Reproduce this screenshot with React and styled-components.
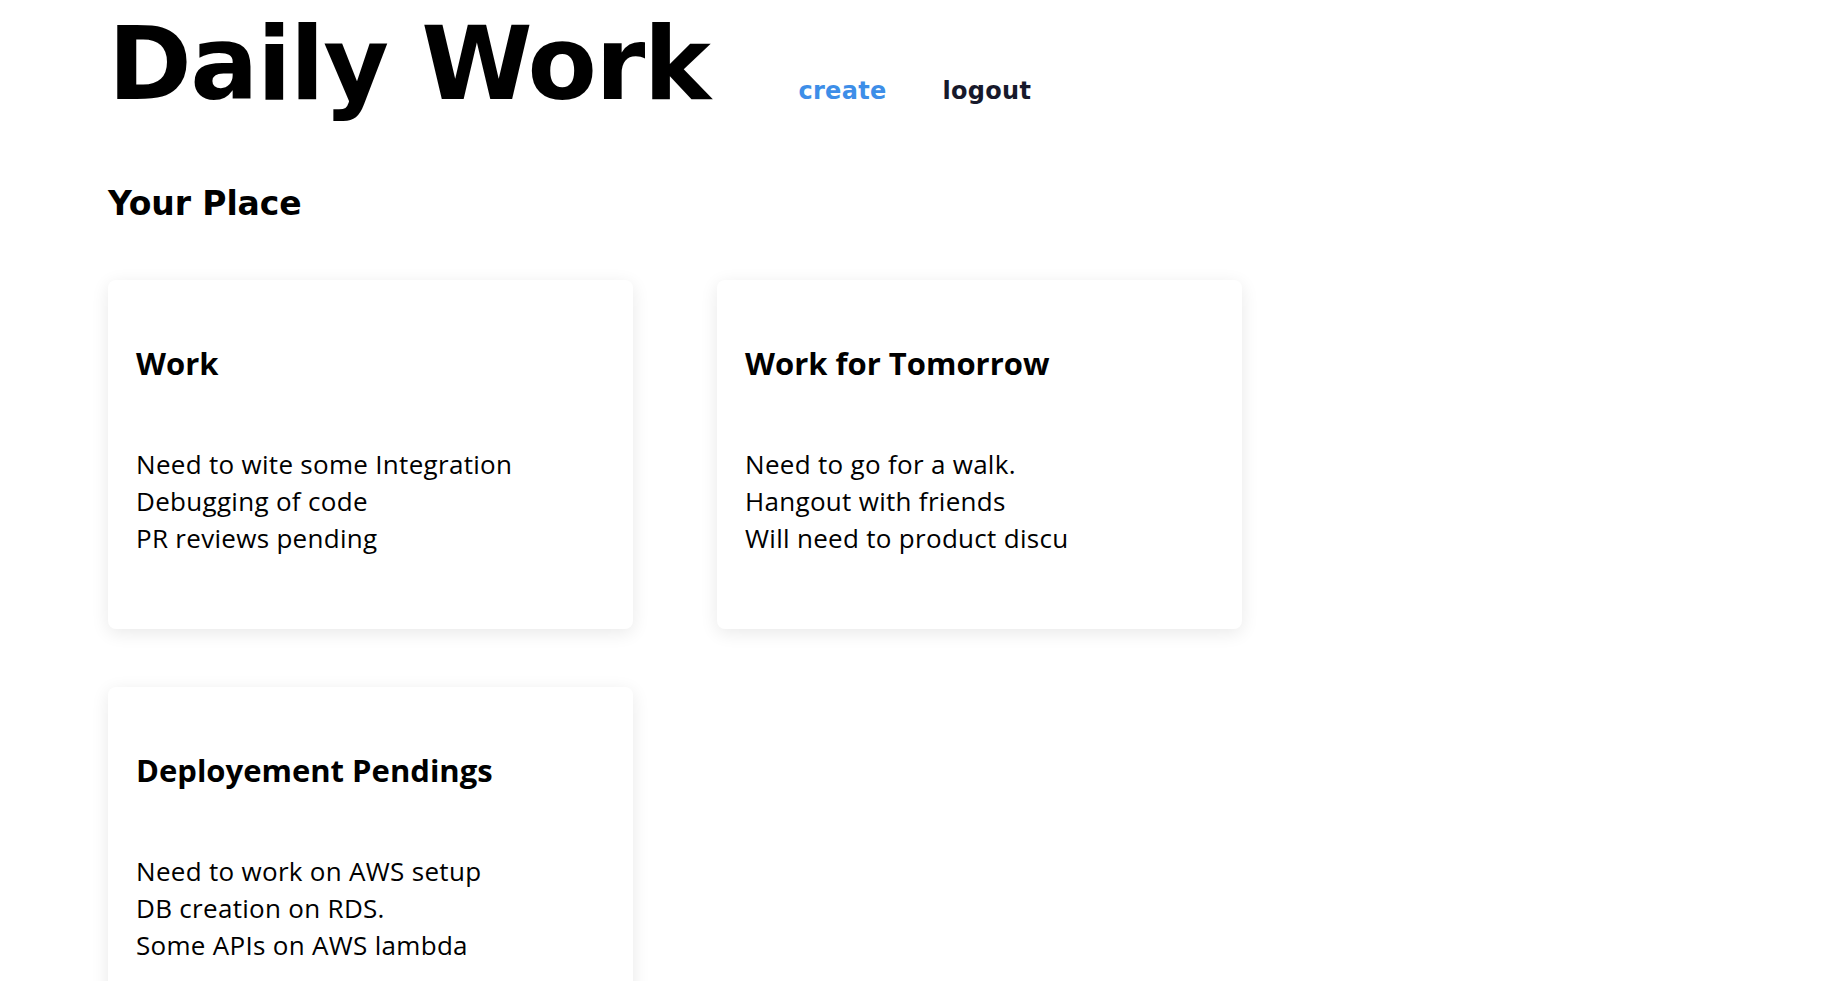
import React from "react";
import styled, { createGlobalStyle } from "styled-components";

const GlobalStyle = createGlobalStyle`
  body {
    margin: 0;
    background: #ffffff;
    color: #000000;
    font-family: "Open Sans", "Noto Sans", sans-serif;
  }
`;

const Page = styled.div`
  padding: 14px 108px 0;
`;

const Header = styled.header`
  display: flex;
  align-items: baseline;
`;

const Title = styled.h1`
  margin: 0;
  font-family: "DejaVu Sans", sans-serif;
  font-size: 101px;
  font-weight: 700;
  line-height: 1;
  letter-spacing: -1.5px;
`;

const Nav = styled.nav`
  display: flex;
  align-items: baseline;
  gap: 56px;
  margin-left: 89px;
`;

const NavLink = styled.a`
  font-family: "DejaVu Sans", sans-serif;
  font-size: 24px;
  font-weight: 700;
  line-height: 1;
  letter-spacing: 0.3px;
  text-decoration: none;
  cursor: pointer;
  color: ${(p) => (p.$active ? "#3d8ee8" : "#17192b")};
`;

const SubTitle = styled.h2`
  margin: 69px 0 0;
  font-family: "DejaVu Sans", sans-serif;
  font-size: 33px;
  font-weight: 700;
  line-height: 1.2;
  letter-spacing: -0.1px;
`;

const Grid = styled.div`
  display: grid;
  grid-template-columns: repeat(2, 525px);
  column-gap: 84px;
  row-gap: 58px;
  margin-top: 56px;
`;

const Card = styled.div`
  box-sizing: border-box;
  min-height: 349px;
  padding: 65px 28px 72px;
  background: #ffffff;
  border-radius: 8px;
  box-shadow: 0 4px 18px rgba(0, 0, 0, 0.09);
`;

const CardTitle = styled.h3`
  margin: 0;
  font-size: 31px;
  font-weight: 700;
  line-height: 1.2;
`;

const CardBody = styled.div`
  margin-top: 64px;
  font-size: 26px;
  line-height: 37px;
  letter-spacing: 0.3px;
`;

const Line = styled.div``;

const places = [
  {
    title: "Work",
    lines: ["Need to wite some Integration", "Debugging of code", "PR reviews pending"],
  },
  {
    title: "Work for Tomorrow",
    lines: ["Need to go for a walk.", "Hangout with friends", "Will need to product discu"],
  },
  {
    title: "Deployement Pendings",
    lines: ["Need to work on AWS setup", "DB creation on RDS.", "Some APIs on AWS lambda"],
  },
];

const App = () => {
  return (
    <>
      <GlobalStyle />
      <Page>
        <Header>
          <Title>Daily Work</Title>
          <Nav>
            <NavLink $active>create</NavLink>
            <NavLink>logout</NavLink>
          </Nav>
        </Header>
        <SubTitle>Your Place</SubTitle>
        <Grid>
          {places.map((place) => (
            <Card key={place.title}>
              <CardTitle>{place.title}</CardTitle>
              <CardBody>
                {place.lines.map((line) => (
                  <Line key={line}>{line}</Line>
                ))}
              </CardBody>
            </Card>
          ))}
        </Grid>
      </Page>
    </>
  );
};

export default App;
